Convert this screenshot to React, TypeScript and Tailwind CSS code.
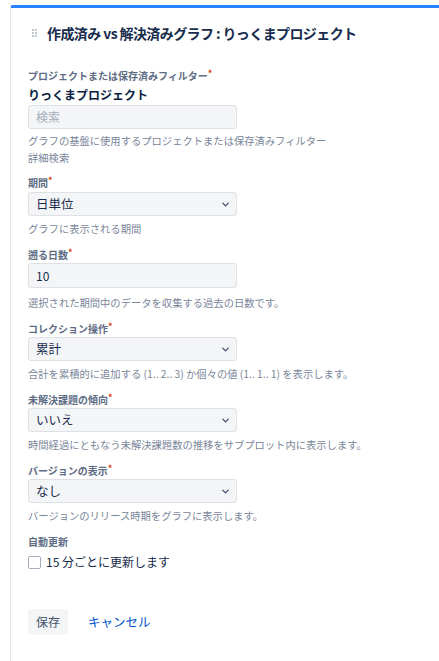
import { ChevronDown } from "lucide-react";

const font = { fontFamily: '"Noto Sans CJK JP", "Noto Sans", sans-serif' };

const Label = ({ text, required = true }: { text: string; required?: boolean }) => (
  <div className="h-4 text-[10px] leading-4 font-bold text-[#5e6c84]">
    {text}
    {required && <span className="text-[#de350b] align-top text-[9px] leading-3">*</span>}
  </div>
);

const Help = ({ text, gap = "mt-[5px]" }: { text: string; gap?: string }) => (
  <div className={`${gap} text-[10.3px] leading-4 text-[#7a869a]`}>{text}</div>
);

const SelectBox = ({ value }: { value: string }) => (
  <div className="w-[209px] h-6 flex items-center justify-between bg-[#f4f5f7] border border-[#dfe1e6] rounded-[3px] pl-[7px] pr-[5px] text-[12.5px] text-[#172b4d]">
    <span>{value}</span>
    <ChevronDown size={11} strokeWidth={3} className="text-[#42526e]" />
  </div>
);

const Field = ({
  label,
  children,
  help,
  gap,
}: {
  label: string;
  children: React.ReactNode;
  help: string;
  gap?: string;
}) => (
  <div className="mt-[10px]">
    <Label text={label} />
    {children}
    <Help text={help} gap={gap} />
  </div>
);

export default function App() {
  return (
    <div className="w-[439px] h-[661px] bg-white overflow-hidden pt-[5px] pl-[10px]" style={font}>
      <div className="h-[700px] border-t-[3px] border-l border-t-[#2684ff] border-l-[#e4e6ea] rounded-tl-[3px] pl-[17px]">
        <div className="pt-[14px] flex items-center h-[36px]">
          <div className="grid grid-cols-2 gap-[1px] w-[5px] ml-[4px] mr-[10px]">
            {Array.from({ length: 6 }).map((_, i) => (
              <span key={i} className="w-[2px] h-[2px] bg-[#c1c7d0]" />
            ))}
          </div>
          <h1 className="text-[14px] font-bold text-[#172b4d] tracking-[-0.6px]">
            作成済み vs 解決済みグラフ : りっくまプロジェクト
          </h1>
        </div>

        <div className="mt-[24px]">
          <Label text="プロジェクトまたは保存済みフィルター" />
          <div className="mt-[2px] h-[18px] text-[12px] leading-[18px] font-bold text-[#091e42]">りっくまプロジェクト</div>
          <div className="mt-[1px] w-[209px] h-6 flex items-center bg-[#f4f5f7] border border-[#dfe1e6] rounded-[3px] pl-[7px] text-[12px] text-[#a5adba]">
            検索
          </div>
          <div className="mt-[3px] text-[10.3px] leading-[17px] text-[#7a869a]">
            グラフの基盤に使用するプロジェクトまたは保存済みフィルター
          </div>
          <div className="text-[10.3px] leading-[17px] text-[#7a869a]">詳細検索</div>
        </div>

        <div className="mt-[-1px]">
          <Field label="期間" help="グラフに表示される期間">
            <div className="mt-[1px]">
              <SelectBox value="日単位" />
            </div>
          </Field>
        </div>

        <Field label="遡る日数" help="選択された期間中のデータを収集する過去の日数です。" gap="mt-[7px]">
          <div className="w-[209px] h-[25px] flex items-center bg-[#f4f5f7] border border-[#dfe1e6] rounded-[3px] pl-[7px] text-[12px] text-[#172b4d]">
            10
          </div>
        </Field>

        <Field label="コレクション操作" help="合計を累積的に追加する (1.. 2.. 3) か個々の値 (1.. 1.. 1) を表示します。">
          <SelectBox value="累計" />
        </Field>

        <Field label="未解決課題の傾向" help="時間経過にともなう未解決課題数の推移をサブプロット内に表示します。">
          <SelectBox value="いいえ" />
        </Field>

        <Field label="バージョンの表示" help="バージョンのリリース時期をグラフに表示します。">
          <SelectBox value="なし" />
        </Field>

        <div className="mt-[10px]">
          <Label text="自動更新" required={false} />
          <label className="mt-[3px] flex items-center gap-[5px] h-[18px] text-[12px] text-[#172b4d]">
            <span className="w-[13px] h-[13px] border border-[#a5adba] rounded-[2px] bg-white" />
            15 分ごとに更新します
          </label>
        </div>

        <div className="mt-[38px] flex items-center gap-[20px]">
          <button className="w-10 h-[26px] bg-[#f4f5f7] rounded-[3px] text-[12px] text-[#42526e]">保存</button>
          <button className="text-[12.5px] text-[#0052cc]">キャンセル</button>
        </div>
      </div>
    </div>
  );
}
